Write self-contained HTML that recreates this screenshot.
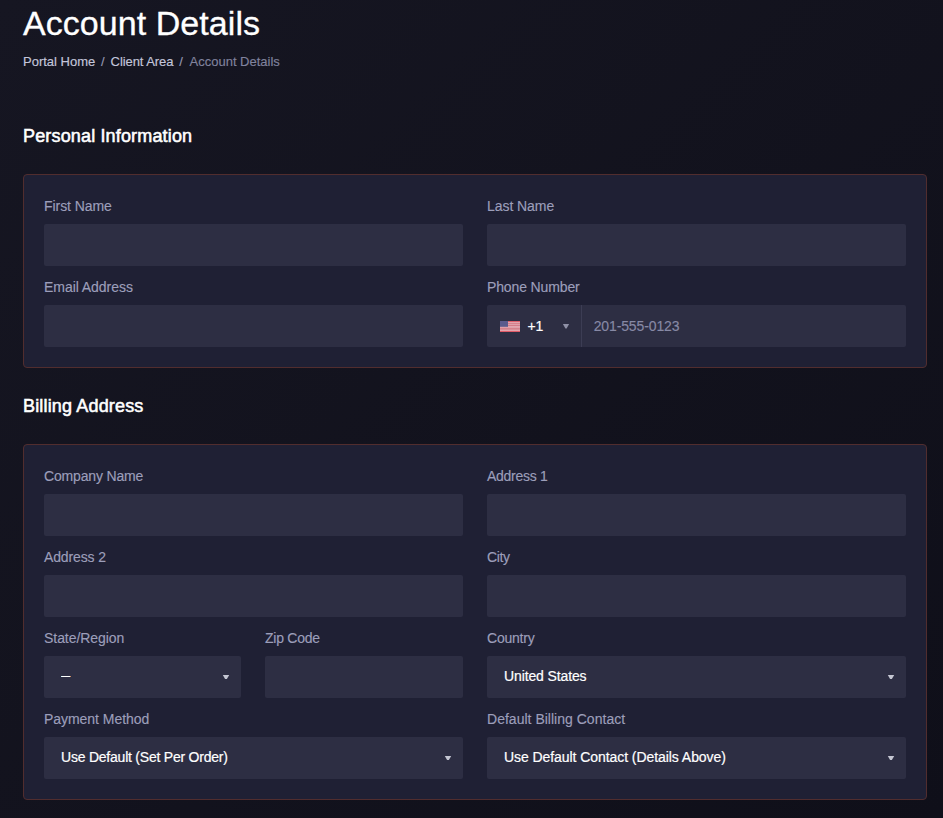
<!DOCTYPE html>
<html lang="en">
<head>
<meta charset="utf-8">
<title>Account Details</title>
<style>
*{box-sizing:border-box;margin:0;padding:0}
html,body{width:943px;height:818px;overflow:hidden;background:#14141f;}
body{background:linear-gradient(135deg,#161622 0%,#0f0f19 100%)}
body{position:relative;font-family:"Liberation Sans",sans-serif;color:#fff;}
.t{position:absolute;white-space:pre;line-height:1;font-weight:normal}
.h1{font-size:34px;color:#fff;-webkit-text-stroke:0.3px #fff}
.bc{font-size:13px}
.h2{font-size:18px;color:#fff;-webkit-text-stroke:0.55px #fff}
.lb{font-size:14px;color:#9c9eba;-webkit-text-stroke:0.15px #9c9eba}
.vl{font-size:14px;color:#ffffff;-webkit-text-stroke:0.2px #fff}
.ph{font-size:14px;color:#8789a5;-webkit-text-stroke:0.15px #8789a5}
.card{position:absolute;left:23px;width:904px;background:#1f2034;border:1px solid #512d2e;border-radius:4px}
.in{position:absolute;height:42px;background:#2d2e43;border-radius:2px}
</style>
</head>
<body>
<div class="card" style="top:174px;height:194px"></div>
<div class="card" style="top:444px;height:356px"></div>
<div class="in" style="left:44px;top:224px;width:419px"></div>
<div class="in" style="left:487px;top:224px;width:419px"></div>
<div class="in" style="left:44px;top:305px;width:419px"></div>
<div class="in" style="left:487px;top:305px;width:419px"></div>
<div class="in" style="left:44px;top:494px;width:419px"></div>
<div class="in" style="left:487px;top:494px;width:419px"></div>
<div class="in" style="left:44px;top:575px;width:419px"></div>
<div class="in" style="left:487px;top:575px;width:419px"></div>
<div class="in" style="left:44px;top:656px;width:197px"></div>
<div class="in" style="left:265px;top:656px;width:198px"></div>
<div class="in" style="left:487px;top:656px;width:419px"></div>
<div class="in" style="left:44px;top:737px;width:419px"></div>
<div class="in" style="left:487px;top:737px;width:419px"></div>
<div style="position:absolute;left:581px;top:305px;width:1px;height:42px;background:#3c3d54"></div>
<svg style="position:absolute;left:500px;top:321px" width="20" height="11" viewBox="0 0 20 11" shape-rendering="crispEdges"><rect y="0" width="20" height="1" fill="#e0606c"/><rect y="1" width="20" height="1" fill="#e3a3ad"/><rect y="2" width="20" height="1" fill="#d5828d"/><rect y="3" width="20" height="1" fill="#e0a0aa"/><rect y="4" width="20" height="1" fill="#d47c88"/><rect y="5" width="20" height="1" fill="#e2a6b0"/><rect y="6" width="20" height="1" fill="#e0a0aa"/><rect y="7" width="20" height="1" fill="#d5828c"/><rect y="8" width="20" height="1" fill="#d98f99"/><rect y="9" width="20" height="1" fill="#e4a4ad"/><rect y="10" width="20" height="1" fill="#e05c68"/><rect width="8" height="5.8" fill="#5b5b8d" shape-rendering="auto"/></svg>
<svg style="position:absolute;left:0;top:0" width="943" height="818" viewBox="0 0 943 818"><polygon points="562.9,323.9 569.1,323.9 566.6,328.4 565.4,328.4" fill="#8f90a6"/><polygon points="222.8,674.9 229.2,674.9 226.9,679.1 225.1,679.1" fill="#c4c6d2"/><polygon points="887.8,674.9 894.2,674.9 891.9,679.1 890.1,679.1" fill="#c4c6d2"/><polygon points="444.8,755.9 451.2,755.9 448.9,760.1 447.1,760.1" fill="#c4c6d2"/><polygon points="887.8,755.9 894.2,755.9 891.9,760.1 890.1,760.1" fill="#c4c6d2"/></svg>
<span class="t vl" style="left:61.3px;top:668.15px;-webkit-text-stroke:0;transform:scaleX(0.67);transform-origin:0 50%">—</span>
<h1 class="t h1" style="left:23px;top:6.42px;letter-spacing:0.055px;">Account Details</h1>
<span class="t bc" style="left:23px;top:54.50px;color:#c4c6db;-webkit-text-stroke:0.15px #c4c6db;">Portal Home</span>
<span class="t bc" style="left:101px;top:54.50px;color:#9698b3;-webkit-text-stroke:0.15px #9698b3;">/</span>
<span class="t bc" style="left:110.6px;top:54.50px;letter-spacing:-0.069px;color:#c4c6db;-webkit-text-stroke:0.15px #c4c6db;">Client Area</span>
<span class="t bc" style="left:179.2px;top:54.50px;color:#9698b3;-webkit-text-stroke:0.15px #9698b3;">/</span>
<span class="t bc" style="left:189.6px;top:54.50px;letter-spacing:-0.009px;color:#80829d;-webkit-text-stroke:0.15px #80829d;">Account Details</span>
<h2 class="t h2" style="left:23px;top:126.86px;letter-spacing:0.158px;">Personal Information</h2>
<h2 class="t h2" style="left:23px;top:396.86px;letter-spacing:0.159px;">Billing Address</h2>
<label class="t lb" style="left:44px;top:199.15px;letter-spacing:-0.061px;">First Name</label>
<label class="t lb" style="left:487px;top:199.15px;letter-spacing:-0.063px;">Last Name</label>
<label class="t lb" style="left:44px;top:280.15px;letter-spacing:-0.049px;">Email Address</label>
<label class="t lb" style="left:487px;top:280.15px;letter-spacing:-0.134px;">Phone Number</label>
<label class="t lb" style="left:44px;top:469.15px;letter-spacing:-0.169px;">Company Name</label>
<label class="t lb" style="left:487px;top:469.15px;letter-spacing:-0.281px;">Address 1</label>
<label class="t lb" style="left:44px;top:550.15px;letter-spacing:-0.131px;">Address 2</label>
<label class="t lb" style="left:487px;top:550.15px;letter-spacing:-0.408px;">City</label>
<label class="t lb" style="left:44px;top:631.15px;letter-spacing:-0.050px;">State/Region</label>
<label class="t lb" style="left:265px;top:631.15px;letter-spacing:-0.245px;">Zip Code</label>
<label class="t lb" style="left:487px;top:631.15px;letter-spacing:-0.222px;">Country</label>
<label class="t lb" style="left:44px;top:712.15px;letter-spacing:-0.042px;">Payment Method</label>
<label class="t lb" style="left:487px;top:712.15px;letter-spacing:0.016px;">Default Billing Contact</label>
<span class="t vl" style="left:504px;top:669.15px;letter-spacing:-0.122px;">United States</span>
<span class="t vl" style="left:61px;top:750.15px;letter-spacing:-0.224px;">Use Default (Set Per Order)</span>
<span class="t vl" style="left:504px;top:750.15px;letter-spacing:-0.065px;">Use Default Contact (Details Above)</span>
<span class="t vl" style="left:527.5px;top:319.15px;letter-spacing:-0.299px;">+1</span>
<span class="t ph" style="left:593.7px;top:319.15px;letter-spacing:-0.126px;">201-555-0123</span>
</body>
</html>
